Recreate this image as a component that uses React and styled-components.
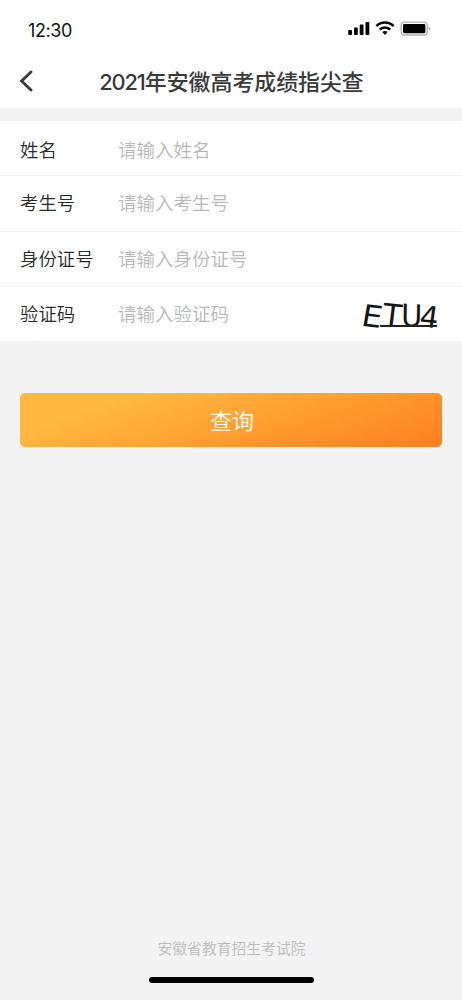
import styled, { createGlobalStyle } from 'styled-components'

const fields = [
  { label: '姓名', hint: '请输入姓名' },
  { label: '考生号', hint: '请输入考生号' },
  { label: '身份证号', hint: '请输入身份证号' },
  { label: '验证码', hint: '请输入验证码', captcha: true },
]

export default function App(){
  return (<>
    <GlobalStyle/>
    <Page>
      <Top>
        <StatusBar>
          <Time>12:30</Time>
          <StatusIcons/>
        </StatusBar>
        <NavBar>
          <Back aria-label="back">
            <svg width="14" height="22" viewBox="0 0 14 22" fill="none" stroke="#3a3a3a" strokeWidth="2.9">
              <path d="M12 2L2.6 11L12 20" strokeLinecap="round" strokeLinejoin="miter"/>
            </svg>
          </Back>
          <Title><Year>2021</Year>年安徽高考成绩指尖查</Title>
        </NavBar>
      </Top>
      <Form>
        {fields.map(f => (
          <Row key={f.label}>
            <Label>{f.label}</Label>
            <Input placeholder={f.hint}/>
            {f.captcha && <Captcha/>}
          </Row>
        ))}
      </Form>
      <Submit>查询</Submit>
      <Footer>
        <Org>安徽省教育招生考试院</Org>
        <HomeBar/>
      </Footer>
    </Page>
  </>)
}

function StatusIcons(){
  return (
    <svg width="84" height="16" viewBox="0 0 84 16">
      <rect x="0.2" y="9" width="3.8" height="5" rx="1"/>
      <rect x="6" y="6.4" width="3.8" height="7.6" rx="1"/>
      <rect x="11.7" y="3.6" width="3.8" height="10.4" rx="1"/>
      <rect x="17.5" y="1" width="3.8" height="13" rx="1"/>
      <g fill="none" stroke="#000" strokeWidth="2.6">
        <path d="M28.4 5.1a12 12 0 0 1 17.2 0"/>
        <path d="M31.7 8.6a7.6 7.6 0 0 1 10.6 0"/>
      </g>
      <path d="M34.3 11.1a4.2 4.2 0 0 1 5.4 0L37 13.9z"/>
      <rect x="53.2" y="1.2" width="26" height="12.8" rx="3" fill="none" stroke="#b0b0b0" strokeWidth="1.3"/>
      <rect x="55" y="3" width="22.4" height="9.2" rx="1.4"/>
      <path d="M80.6 5.6q1.8 .7 1.8 1.9t-1.8 1.9z" fill="#aaa"/>
    </svg>
  )
}

function Captcha(){
  return (
    <CaptchaSvg width="84" height="38" viewBox="0 0 84 38">
      <text transform="translate(.3 31.5) rotate(7) skewX(-3) scale(1.04 .97)">E</text>
      <text transform="translate(21.5 31.3) rotate(6) skewX(-1)">T</text>
      <text transform="translate(41 32) rotate(3) skewX(2) scale(.93 1)">U</text>
      <text transform="translate(58.5 32.5) rotate(5) skewX(-3) scale(.95)">4</text>
      <path d="M20 32H77" stroke="#222" strokeWidth="1.9"/>
    </CaptchaSvg>
  )
}

const GlobalStyle = createGlobalStyle`
  body {
    margin: 0;
    background: #f3f3f3;
    font-family: "Noto Sans CJK SC", sans-serif;
    font-weight: 350;
  }
`
const Page = styled.div`
  display: flex;
  flex-direction: column;
  height: 1000px;
  background: #f3f3f3;
`
const Top = styled.header`
  height: 108px;
  background: #fff;
`
const StatusBar = styled.div`
  display: flex;
  align-items: center;
  justify-content: space-between;
  box-sizing: border-box;
  height: 56px;
  padding: 4px 30px 0 28px;

  svg {
    margin-bottom: 3px;
  }
`
const Time = styled.span`
  font-family: Inter, sans-serif;
  font-size: 18px;
  font-weight: 400;
  letter-spacing: -0.4px;
  color: #111;
`
const NavBar = styled.div`
  display: grid;
  grid-template-columns: 60px 1fr 60px;
  align-items: center;
  height: 52px;
`
const Back = styled.button`
  display: flex;
  border: 0;
  padding: 0 0 2px 19px;
  background: none;
`
const Title = styled.h1`
  margin: 0;
  padding: 0 0 1px 1px;
  font-size: 21.9px;
  font-weight: 500;
  line-height: 32px;
  text-align: center;
  white-space: nowrap;
  color: #3a3a3a;
`
const Year = styled.span`
  font-family: Inter, sans-serif;
  font-size: 21.8px;
  letter-spacing: -1.1px;
`
const Form = styled.form`
  margin-top: 13px;
  background: #fff;
`
const Row = styled.div`
  display: flex;
  align-items: center;
  box-sizing: border-box;
  height: 55.5px;
  padding: 0 22px 2px 20px;
  border-bottom: 1px solid #f3f3f3;

  &:first-child {
    height: 55px;
    padding: 2px 22px 0 20px;
  }
  &:last-child {
    height: 54px;
    border: 0;
    padding: 0 18px 2px 20px;
  }
`
const Label = styled.label`
  width: 98px;
  font-size: 18.4px;
  line-height: 28px;
  color: #2a2a2a;
`
const Input = styled.input`
  flex: 1;
  min-width: 0;
  border: 0;
  padding: 0;
  outline: 0;
  background: none;
  font-family: inherit;
  font-size: 18.5px;
  font-weight: inherit;
  line-height: 28px;

  &::placeholder {
    color: #b8b8b8;
  }
`
const CaptchaSvg = styled.svg`
  overflow: visible;
  font-family: "DejaVu Sans", sans-serif;
  font-size: 31px;
  font-weight: 400;
  fill: #151515;
`
const Submit = styled.button`
  height: 54px;
  margin: 52px 20px 0;
  border: 0;
  border-radius: 5px;
  padding: 0 0 2px 2px;
  background: linear-gradient(162deg, #ffb941 20%, #ff7e1e 100%);
  font-family: inherit;
  font-size: 22px;
  font-weight: inherit;
  color: #fff;
`
const Footer = styled.footer`
  display: flex;
  flex-direction: column;
  align-items: center;
  margin-top: auto;
  padding-bottom: 17px;
`
const Org = styled.p`
  margin: 0 0 17px;
  padding-left: 1px;
  font-size: 14.8px;
  line-height: 24px;
  color: #bcbcbc;
`
const HomeBar = styled.div`
  width: 165px;
  height: 6px;
  border-radius: 3px;
  background: #000;
`
